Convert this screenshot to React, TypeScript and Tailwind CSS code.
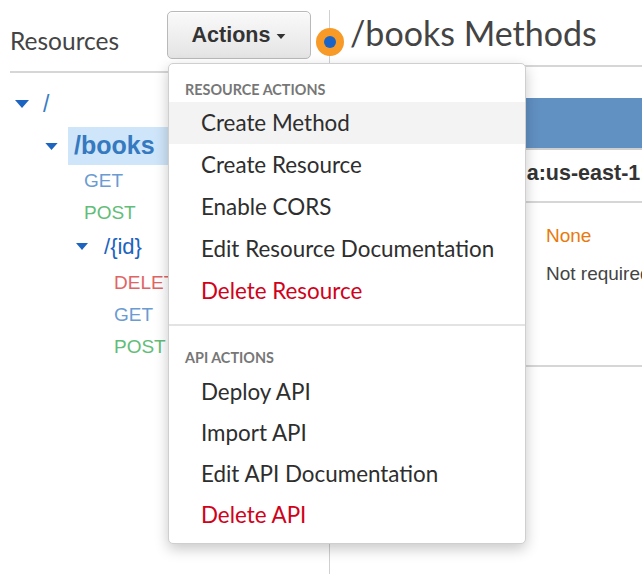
import React from "react";

const lato = { fontFamily: "Lato, 'Open Sans', sans-serif" };
const arial = { fontFamily: "'Liberation Sans', Arial, sans-serif" };

function Caret({ className }: { className?: string }) {
  return (
    <svg className={className} width="14" height="8" viewBox="0 0 14 8">
      <path d="M0 0 L14 0 L7 8 Z" fill="currentColor" />
    </svg>
  );
}

function MenuItem({ label, danger, active, short }: { label: string; danger?: boolean; active?: boolean; short?: boolean }) {
  return (
    <div
      className={`${short ? "h-[41px]" : "h-[42px]"} flex items-center pl-[32px] text-[22.4px] ${active ? "bg-[#f3f3f3]" : ""} ${
        danger ? "text-[#d0021b]" : "text-[#2e2e2e]"
      }`}
      style={lato}
    >
      {label}
    </div>
  );
}

export default function App() {
  return (
    <div className="relative w-[642px] h-[574px] overflow-hidden bg-white" style={arial}>
      <div className="flex h-full">
        {/* Left column */}
        <div className="w-[329px] shrink-0">
          <div className="ml-[10px] h-[73px] flex items-start border-b-2 border-[#d6d6d6]">
            <div className="mt-[26px] text-[24.5px] leading-[30px] text-[#444]" style={lato}>
              Resources
            </div>
            <button
              className="ml-auto mr-[18px] mt-[11px] h-[48px] w-[144px] rounded-[5px] border border-[#b9b9b9] bg-gradient-to-b from-[#fafafa] to-[#e4e4e4] shadow-[inset_0_1px_0_rgba(255,255,255,0.8)] flex items-center justify-center gap-[6px] text-[#333]"
              style={arial}
            >
              <span className="text-[21.5px] font-bold">Actions</span>
              <Caret className="w-[10px] h-[5px] mt-[2px]" />
            </button>
          </div>

          <div className="mt-[14px]">
            <div className="h-[34px] flex items-center pl-[15px]">
              <Caret className="w-[14px] h-[8px] text-[#1c64c0]" />
              <span className="ml-[14px] text-[23px] text-[#3a7cc4]">/</span>
            </div>
            <div className="mt-[6px] h-[38px] flex items-center pl-[45px]">
              <Caret className="w-[13px] h-[7px] text-[#1c64c0]" />
              <div className="ml-[10px] h-[38px] flex-1 bg-[#cfe5f9] flex items-center pl-[6px]">
                <span className="text-[25px] font-bold text-[#3579c0]">/books</span>
              </div>
            </div>
            <div className="h-[32px] flex items-center pl-[84px] text-[19px] text-[#6a9bd2]">GET</div>
            <div className="h-[32px] flex items-center pl-[84px] text-[19px] text-[#62bd78]">POST</div>
            <div className="h-[34px] flex items-center pl-[76px]">
              <Caret className="w-[12px] h-[7px] text-[#1c64c0]" />
              <span className="ml-[16px] text-[22px] text-[#1c64c0]">/{"{id}"}</span>
            </div>
            <div className="mt-[4px] h-[32px] flex items-center pl-[114px] text-[19px] text-[#e06464]">DELETE</div>
            <div className="h-[32px] flex items-center pl-[114px] text-[19px] text-[#6a9bd2]">GET</div>
            <div className="h-[32px] flex items-center pl-[114px] text-[19px] text-[#62bd78]">POST</div>
          </div>
        </div>

        {/* Right column */}
        <div className="flex-1 mt-[10px] border-l border-[#d0d0d0] min-w-0">
          <div className="h-[57px] border-b-2 border-[#d6d6d6] pl-[20px] pt-[1px]">
            <div className="text-[34px] leading-[44px] text-[#444]" style={lato}>
              /books Methods
            </div>
          </div>
          <div className="mt-[31px] h-[52px] bg-[#6190c2] border-b-2 border-[#cfcfcf]" />
          <div className="h-[53px] border-b-2 border-[#d6d6d6] flex items-center pl-[45px] pb-[5px] whitespace-nowrap overflow-hidden">
            <span className="text-[21.5px] font-bold text-[#333]">arn:aws:lambda:us-east-1:123456789012:function:books</span>
          </div>
          <div className="h-[164px] border-b-2 border-[#d6d6d6] pt-[14px] flex flex-col text-[19px] whitespace-nowrap pl-[216px]">
            <div className="h-[38px] flex items-center text-[#e8790b]">None</div>
            <div className="h-[38px] flex items-center text-[#444]">Not required</div>
          </div>
        </div>
      </div>

      {/* Status dot */}
      <div className="absolute left-[316px] top-[28px] w-[28px] h-[28px] rounded-full bg-[#f89a27] flex items-center justify-center">
        <div className="w-[12px] h-[12px] rounded-full bg-[#1b63c6]" />
      </div>

      {/* Dropdown menu */}
      <div className="absolute left-[168px] top-[63px] w-[358px] h-[481px] bg-white rounded-[5px] border border-[#cfcfcf] shadow-[0_5px_14px_rgba(0,0,0,0.22)]">
        <div className="pt-[16px] pb-[2px] pl-[16px] leading-[20px] text-[14.4px] font-bold text-[#777]" style={lato}>
          RESOURCE ACTIONS
        </div>
        <MenuItem label="Create Method" active />
        <MenuItem label="Create Resource" />
        <MenuItem label="Enable CORS" />
        <MenuItem label="Edit Resource Documentation" />
        <MenuItem label="Delete Resource" danger />
        <div className="mt-[12px] h-[2px] bg-[#e3e3e3]" />
        <div className="pt-[22px] pb-[3px] pl-[16px] leading-[20px] text-[14.4px] font-bold text-[#777]" style={lato}>
          API ACTIONS
        </div>
        <MenuItem label="Deploy API" short />
        <MenuItem label="Import API" short />
        <MenuItem label="Edit API Documentation" short />
        <MenuItem label="Delete API" danger short />
      </div>
    </div>
  );
}
